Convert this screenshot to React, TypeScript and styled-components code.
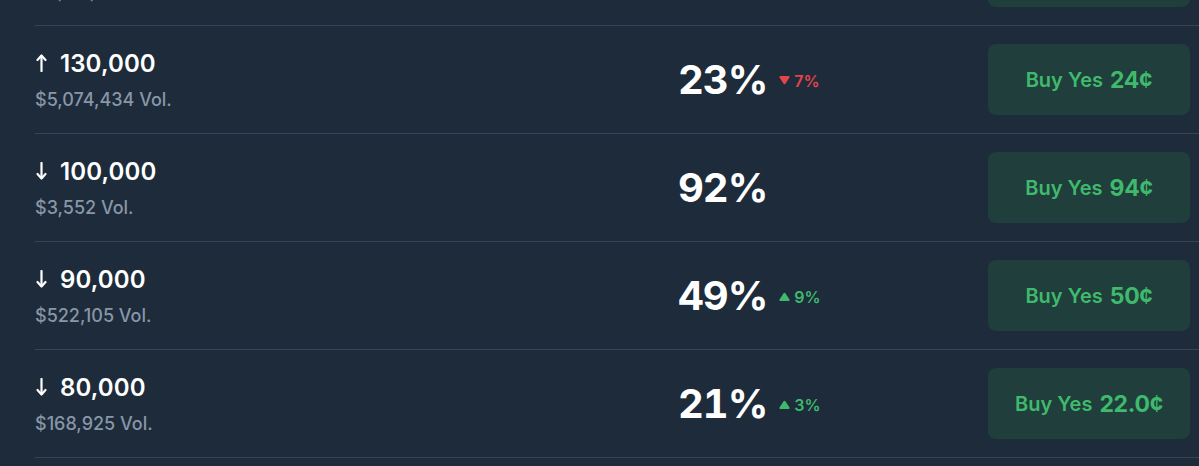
import React from "react";
import styled, { createGlobalStyle } from "styled-components";

const Global = createGlobalStyle`
  html, body { margin: 0; padding: 0; background: #1d2b3a; }
  body { font-family: Inter, "Open Sans", sans-serif; overflow: hidden; height: 466px; }
`;

type Outcome = {
  dir: "up" | "down";
  label: string;
  vol: string;
  pct: string;
  delta?: { dir: "up" | "down"; value: string };
  price: string;
};

const outcomes: Outcome[] = [
  { dir: "up", label: "140,000", vol: "$2,917,360 Vol.", pct: "9%", price: "9¢" },
  { dir: "up", label: "130,000", vol: "$5,074,434 Vol.", pct: "23%", delta: { dir: "down", value: "7%" }, price: "24¢" },
  { dir: "down", label: "100,000", vol: "$3,552 Vol.", pct: "92%", price: "94¢" },
  { dir: "down", label: "90,000", vol: "$522,105 Vol.", pct: "49%", delta: { dir: "up", value: "9%" }, price: "50¢" },
  { dir: "down", label: "80,000", vol: "$168,925 Vol.", pct: "21%", delta: { dir: "up", value: "3%" }, price: "22.0¢" },
  { dir: "down", label: "70,000", vol: "$98,410 Vol.", pct: "12%", price: "12¢" },
];

const Page = styled.div`
  width: 1199px;
  height: 466px;
  overflow: hidden;
`;

const List = styled.div`
  margin-top: -82px;
  margin-left: 35px;
  display: flex;
  flex-direction: column;
`;

const Row = styled.div`
  display: grid;
  grid-template-columns: 643px 1fr 202px;
  align-items: center;
  height: 107px;
  padding-right: 9px;
  border-bottom: 1px solid #364556;
`;

const Info = styled.div`
  display: flex;
  flex-direction: column;
  gap: 13px;
`;

const Title = styled.div`
  display: flex;
  align-items: center;
  gap: 13px;
  color: #ffffff;
  font-size: 24px;
  font-weight: 600;
  line-height: 27px;
  letter-spacing: 0.1px;
`;

const ArrowIcon = styled.svg`
  display: block;
  flex: none;
  margin-left: 1px;
`;

const Vol = styled.div`
  color: #8896a8;
  font-size: 18px;
  font-weight: 500;
  line-height: 20px;
`;

const Chance = styled.div`
  display: flex;
  align-items: center;
  gap: 12px;
`;

const Pct = styled.div`
  color: #ffffff;
  font-size: 40px;
  font-weight: 700;
  line-height: 48px;
  letter-spacing: -1px;
  font-variant-numeric: tabular-nums;
`;

const Delta = styled.div<{ $up: boolean }>`
  display: flex;
  align-items: center;
  gap: 4px;
  color: ${(p) => (p.$up ? "#3fba6c" : "#e3454b")};
  font-size: 16px;
  font-weight: 600;
  margin-top: 2px;
`;

const BuyButton = styled.button`
  width: 202px;
  height: 71px;
  border: none;
  border-radius: 8px;
  background: #203e3c;
  color: #3fba6c;
  font-family: Inter, "Open Sans", sans-serif;
  display: flex;
  align-items: center;
  justify-content: center;
  gap: 7px;
  cursor: pointer;
  padding: 0;
`;

const BuyLabel = styled.span`
  font-size: 20px;
  font-weight: 600;
`;

const BuyPrice = styled.span`
  font-size: 23px;
  font-weight: 700;
  letter-spacing: -0.3px;
`;

const Arrow = ({ up }: { up: boolean }) => (
  <ArrowIcon width="11" height="18" viewBox="0 0 11 18" aria-hidden>
    <g
      fill="none"
      stroke="#fff"
      strokeWidth="2.2"
      strokeLinecap="round"
      strokeLinejoin="round"
      transform={up ? undefined : "rotate(180 5.5 9)"}
    >
      <path d="M5.5 2v15" />
      <path d="M1.5 6l4-4.5 4 4.5" />
    </g>
  </ArrowIcon>
);

const Tri = ({ up }: { up: boolean }) => (
  <svg width="11" height="9" viewBox="0 0 11 9" aria-hidden>
    {up ? (
      <path d="M4.6 1.2a1 1 0 0 1 1.8 0l4.1 6.3a.9.9 0 0 1-.8 1.4H1.3a.9.9 0 0 1-.8-1.4z" fill="currentColor" />
    ) : (
      <path d="M4.6 7.8a1 1 0 0 0 1.8 0l4.1-6.3A.9.9 0 0 0 9.7.1H1.3a.9.9 0 0 0-.8 1.4z" fill="currentColor" />
    )}
  </svg>
);

export default function App() {
  return (
    <Page>
      <Global />
      <List>
        {outcomes.map((o, i) => (
          <Row key={i}>
            <Info>
              <Title>
                <Arrow up={o.dir === "up"} />
                {o.label}
              </Title>
              <Vol>{o.vol}</Vol>
            </Info>
            <Chance>
              <Pct>{o.pct}</Pct>
              {o.delta && (
                <Delta $up={o.delta.dir === "up"}>
                  <Tri up={o.delta.dir === "up"} />
                  {o.delta.value}
                </Delta>
              )}
            </Chance>
            <BuyButton>
              <BuyLabel>Buy Yes</BuyLabel>
              <BuyPrice>{o.price}</BuyPrice>
            </BuyButton>
          </Row>
        ))}
      </List>
    </Page>
  );
}
